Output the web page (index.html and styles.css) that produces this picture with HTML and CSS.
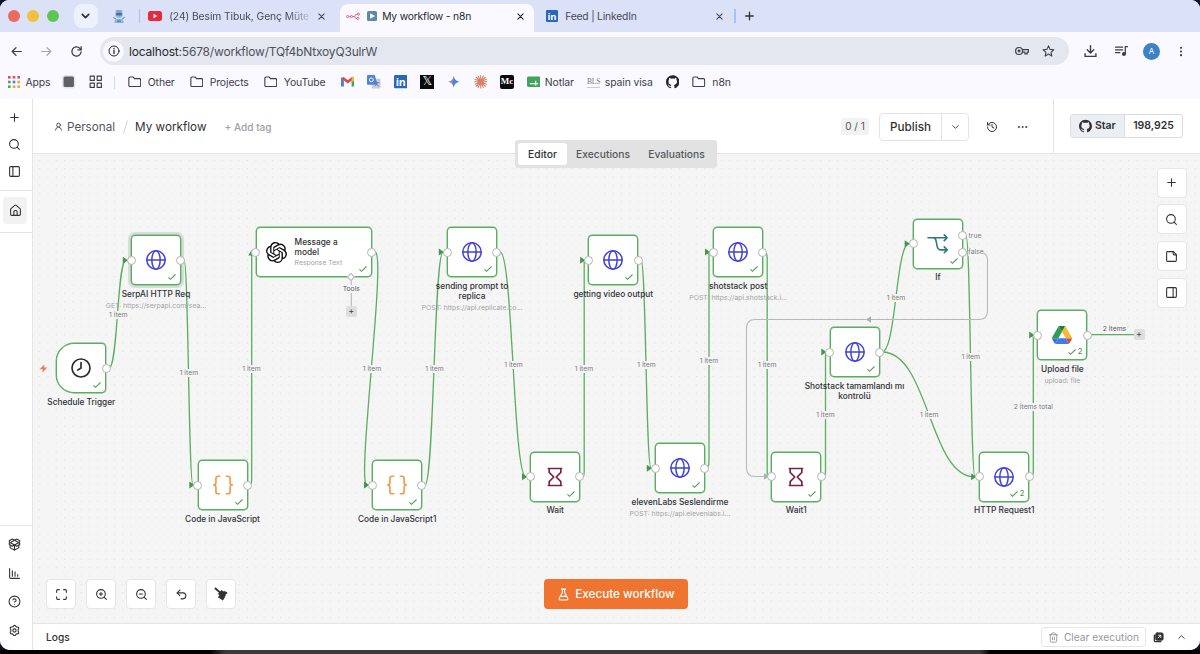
FILE: index.html
```html
<!DOCTYPE html>
<html lang="en">
<head>
  <meta charset="UTF-8" />
  <title>My workflow - n8n</title>
  <meta name="viewport" content="width=device-width, initial-scale=1.0"/>
  <link rel="stylesheet" href="styles.css">
</head>
<body>

  <!-- icon sprite -->
  <svg class="sprite" width="0" height="0">
    <symbol id="plus" viewBox="0 0 24 24"><path d="M5 12h14M12 5v14"/></symbol>
    <symbol id="close" viewBox="0 0 24 24"><path d="M5 5l14 14M19 5L5 19"/></symbol>
    <symbol id="search" viewBox="0 0 24 24"><circle cx="11" cy="11" r="8"/><path d="M21 21l-4.3-4.3"/></symbol>
    <symbol id="panel-left" viewBox="0 0 24 24"><rect x="3" y="3" width="18" height="18" rx="2"/><path d="M9 3v18"/></symbol>
    <symbol id="panel-right" viewBox="0 0 24 24"><rect x="3" y="3" width="18" height="18" rx="2"/><path d="M15 3v18"/></symbol>
    <symbol id="home" viewBox="0 0 24 24"><path d="M15 21v-7a2 2 0 0 0-2-2h-2a2 2 0 0 0-2 2v7"/><path d="M3 10a2 2 0 0 1 .7-1.5l7-6a2 2 0 0 1 2.6 0l7 6A2 2 0 0 1 21 10v9a2 2 0 0 1-2 2H5a2 2 0 0 1-2-2z"/></symbol>
    <symbol id="package" viewBox="0 0 24 24"><path d="M12 22v-9"/><path d="M15.2 2.2a1.7 1.7 0 0 1 1.6 0L21 4.6a1.9 1.9 0 0 1 0 3.2L8.8 14.8a1.7 1.7 0 0 1-1.6 0L3 12.4a1.9 1.9 0 0 1 0-3.2z"/><path d="M20 13v3.9a2 2 0 0 1-1.1 1.8l-6 3a2 2 0 0 1-1.8 0l-6-3A2 2 0 0 1 4 16.9V13"/><path d="M21 12.4a1.9 1.9 0 0 0 0-3.2L8.8 2.2a1.7 1.7 0 0 0-1.6 0L3 4.6a1.9 1.9 0 0 0 0 3.2l12.2 7a1.7 1.7 0 0 0 1.6 0z"/></symbol>
    <symbol id="chart" viewBox="0 0 24 24"><path d="M3 3v16a2 2 0 0 0 2 2h16M8 17V7M13 17V9M18 17v-3"/></symbol>
    <symbol id="help" viewBox="0 0 24 24"><circle cx="12" cy="12" r="10"/><path d="M9.1 9a3 3 0 0 1 5.8 1c0 2-3 3-3 3M12 17h.01"/></symbol>
    <symbol id="gear" viewBox="0 0 24 24"><path d="M10 3.5a2.3 2.3 0 0 1 4 0l.5.9a2.3 2.3 0 0 0 2 1.1h1a2.3 2.3 0 0 1 2 3.5l-.6 1a2.3 2.3 0 0 0 0 2.3v1.4l.6 1a2.3 2.3 0 0 1-2 3.5h-1a2.3 2.3 0 0 0-2 1.1l-.5.9a2.3 2.3 0 0 1-4 0l-.5-.9a2.3 2.3 0 0 0-2-1.1h-1a2.3 2.3 0 0 1-2-3.5l.6-1a2.3 2.3 0 0 0 0-2.3v-1.4l-.6-1a2.3 2.3 0 0 1 2-3.5h1a2.3 2.3 0 0 0 2-1.1z"/><circle cx="12" cy="12" r="3"/></symbol>
    <symbol id="user" viewBox="0 0 24 24"><circle cx="12" cy="8" r="5"/><path d="M20 22a8 8 0 0 0-16 0"/></symbol>
    <symbol id="chevron-down" viewBox="0 0 24 24"><path d="M6 9l6 6 6-6"/></symbol>
    <symbol id="chevron-up" viewBox="0 0 24 24"><path d="M6 15l6-6 6 6"/></symbol>
    <symbol id="history" viewBox="0 0 24 24"><path d="M3 12a9 9 0 1 0 9-9 9.7 9.7 0 0 0-6.7 2.7L3 8"/><path d="M3 3v5h5M12 7v5l4 2"/></symbol>
    <symbol id="dots" viewBox="0 0 24 24"><g fill="currentColor" stroke-width="1"><circle cx="4" cy="12" r="1.5"/><circle cx="12" cy="12" r="1.5"/><circle cx="20" cy="12" r="1.5"/></g></symbol>
    <symbol id="note" viewBox="0 0 24 24"><path d="M15.5 3H5a2 2 0 0 0-2 2v14a2 2 0 0 0 2 2h14a2 2 0 0 0 2-2V8.5z"/><path d="M15 3v4a2 2 0 0 0 2 2h4"/></symbol>
    <symbol id="fit" viewBox="0 0 24 24"><path d="M8 3H5a2 2 0 0 0-2 2v3M21 8V5a2 2 0 0 0-2-2h-3M3 16v3a2 2 0 0 0 2 2h3M16 21h3a2 2 0 0 0 2-2v-3"/></symbol>
    <symbol id="zoom-in" viewBox="0 0 24 24"><circle cx="11" cy="11" r="8"/><path d="M21 21l-4.3-4.3M11 8v6M8 11h6"/></symbol>
    <symbol id="zoom-out" viewBox="0 0 24 24"><circle cx="11" cy="11" r="8"/><path d="M21 21l-4.3-4.3M8 11h6"/></symbol>
    <symbol id="undo" viewBox="0 0 24 24"><path d="M9 14L4 9l5-5"/><path d="M4 9h10.5a5.5 5.5 0 0 1 0 11H11"/></symbol>
    <symbol id="broom" viewBox="0 0 24 24"><path d="M2.5 2.5L11 10" stroke-width="3.2"/><path d="M8 11l5-5 3 2 2-.5 4.500 2.500-3 3-1 3.500-1.500 2.500-2 3.500-3-2.500-4.500-2.500 2-2.500z" fill="currentColor" stroke-width="1.500"/></symbol>
    <symbol id="flask" viewBox="0 0 24 24"><path d="M14 2v6.5l5.8 10.5a2 2 0 0 1-1.8 3H6a2 2 0 0 1-1.8-3L10 8.5V2M8 2h8M7 15.5h10"/></symbol>
    <symbol id="trash" viewBox="0 0 24 24"><path d="M3 6h18M19 6v14a2 2 0 0 1-2 2H7a2 2 0 0 1-2-2V6M8 6V4a2 2 0 0 1 2-2h4a2 2 0 0 1 2 2v2M10 11v6M14 11v6"/></symbol>
    <symbol id="popout" viewBox="0 0 24 24"><path d="M3 7v12a2 2 0 0 0 2 2h12" stroke-width="3"/><rect x="6" y="2" width="16" height="16" rx="3" fill="currentColor"/><path d="M11 13l6-6M12 7h5v5" stroke="#fff" stroke-width="1.800"/></symbol>
    <symbol id="arrow-left" viewBox="0 0 24 24"><path d="M21 12H4M11 5l-7 7 7 7"/></symbol>
    <symbol id="arrow-right" viewBox="0 0 24 24"><path d="M3 12h17M13 5l7 7-7 7"/></symbol>
    <symbol id="reload" viewBox="0 0 24 24"><path d="M20.5 12.5a8.5 8.5 0 1 1-2.5-6.5l2.5 2.5"/><path d="M20.5 3v6h-6"/></symbol>
    <symbol id="info" viewBox="0 0 24 24"><circle cx="12" cy="12" r="10"/><path d="M12 11v6M12 7v.5" stroke-width="2.6"/></symbol>
    <symbol id="key" viewBox="0 0 24 24"><circle cx="7" cy="12" r="6"/><circle cx="7" cy="12" r="1.5" fill="currentColor"/><path d="M12.5 9.5H23v4.500h-2v3h-4v-3h-4.500"/></symbol>
    <symbol id="star" viewBox="0 0 24 24"><path d="M12 2.5l2.9 6.5 7 .7-5.3 4.7 1.600 7-6.200-3.700-6.200 3.700 1.600-7L2.100 9.700l7-.7z"/></symbol>
    <symbol id="download" viewBox="0 0 24 24"><path d="M12 2v13M6 9.5l6 6 6-6M2 17v5h20v-5"/></symbol>
    <symbol id="queue" viewBox="0 0 24 24"><path d="M1 5h13M1 10h13M1 15h8M19 17V4h4"/><circle cx="16.500" cy="17.500" r="2.500" fill="currentColor"/></symbol>
    <symbol id="kebab" viewBox="0 0 24 24"><g fill="currentColor" stroke="none"><circle cx="12" cy="4" r="2.300"/><circle cx="12" cy="12" r="2.300"/><circle cx="12" cy="20" r="2.300"/></g></symbol>
    <symbol id="folder" viewBox="0 0 24 24"><path d="M1.500 5.500a2 2 0 0 1 2-2H9l2.500 3h9a2 2 0 0 1 2 2v10a2 2 0 0 1-2 2h-17a2 2 0 0 1-2-2z"/></symbol>
    <symbol id="squares" viewBox="0 0 24 24"><rect x="2" y="2" width="7.500" height="7.500"/><rect x="14.500" y="2" width="7.500" height="7.500"/><rect x="2" y="14.500" width="7.500" height="7.500"/><rect x="14.500" y="14.500" width="7.500" height="7.500"/></symbol>
    <symbol id="github" viewBox="0 0 24 24"><path fill="currentColor" stroke="none" d="M12 .297c-6.630 0-12 5.373-12 12 0 5.303 3.438 9.800 8.205 11.385.6.113.82-.258.82-.577 0-.285-.01-1.040-.015-2.040-3.338.724-4.042-1.610-4.042-1.610C4.422 18.070 3.633 17.700 3.633 17.700c-1.087-.744.084-.729.084-.729 1.205.084 1.838 1.236 1.838 1.236 1.070 1.835 2.809 1.305 3.495.998.108-.776.417-1.305.76-1.605-2.665-.3-5.466-1.332-5.466-5.930 0-1.310.465-2.380 1.235-3.220-.135-.303-.54-1.523.105-3.176 0 0 1.005-.322 3.300 1.230.96-.267 1.980-.399 3-.405 1.020.006 2.040.138 3 .405 2.280-1.552 3.285-1.230 3.285-1.230.645 1.653.24 2.873.12 3.176.765.840 1.230 1.910 1.230 3.220 0 4.610-2.805 5.625-5.475 5.920.42.360.81 1.096.81 2.220 0 1.606-.015 2.896-.015 3.286 0 .315.21.690.825.570C20.565 22.092 24 17.592 24 12.297c0-6.627-5.373-12-12-12"/></symbol>

    <!-- node icons -->
    <symbol id="globe" viewBox="0 0 24 24"><g stroke="#4243d4" stroke-width="1.800"><circle cx="12" cy="12" r="11"/><ellipse cx="12" cy="12" rx="5" ry="11"/><path d="M1 12h22"/></g></symbol>
    <symbol id="clock" viewBox="0 0 24 24"><g stroke="#2b2b33" stroke-width="2"><circle cx="12" cy="12" r="10.800"/><path d="M12 5.500V12l-4 2.500"/></g></symbol>
    <symbol id="braces" viewBox="0 0 24 24"><path stroke="#f29b4e" stroke-width="2" d="M8 1.500H6a2.500 2.500 0 0 0-2.500 2.500v5c0 1.800-1 3-2.800 3 1.800 0 2.800 1.200 2.800 3v5A2.500 2.500 0 0 0 6 22.500h2M16 1.500h2a2.500 2.500 0 0 1 2.500 2.500v5c0 1.800 1 3 2.800 3-1.800 0-2.800 1.200-2.800 3v5a2.500 2.500 0 0 1-2.500 2.500h-2"/></symbol>
    <symbol id="hourglass" viewBox="0 0 24 24"><path stroke="#7b2346" stroke-width="2" d="M4 1.800h16M4 22.200h16M5 2v4.500l5.500 5.500L5 17.500V22M19 2v4.500L13.500 12l5.500 5.500V22"/></symbol>
    <symbol id="if" viewBox="0 0 24 24"><path stroke="#2f7a73" stroke-width="1.900" d="M0 4.500h23M19.500 1l3.500 3.500L19.500 8M6.500 4.500c2.500 0 2.800 1.500 3.300 4l1 5.500c.6 3.500 1.500 5 4.200 5h8M19.500 15.500l3.500 3.500-3.500 3.500"/></symbol>
    <symbol id="drive" viewBox="0 0 87.300 78">
      <g stroke="none">
        <path fill="#3b6fe0" d="M6.600 66.850l3.850 6.650c.8 1.400 1.950 2.500 3.300 3.300L27.500 53H0c0 1.550.4 3.100 1.200 4.500z"/>
        <path fill="#2f9e4f" d="M43.650 25L29.900 1.200c-1.350.8-2.500 1.900-3.300 3.300l-25.400 44A9.060 9.060 0 0 0 0 53h27.500z"/>
        <path fill="#dd4b3c" d="M73.550 76.800c1.350-.8 2.500-1.900 3.300-3.300l9.250-16c.8-1.400 1.200-2.950 1.200-4.500H59.800l5.850 11.500z"/>
        <path fill="#1f7a3a" d="M43.650 25L57.400 1.200C56.050.4 54.500 0 52.900 0H34.400c-1.600 0-3.150.450-4.500 1.200z"/>
        <path fill="#3f7ee8" d="M59.800 53H27.500L13.750 76.800c1.350.8 2.900 1.200 4.500 1.200h50.800c1.600 0 3.150-.450 4.500-1.200z"/>
        <path fill="#f6bb35" d="M73.400 26.500l-12.700-22c-.8-1.400-1.950-2.500-3.300-3.300L43.650 25 59.800 53h27.450c0-1.550-.4-3.100-1.200-4.500z"/>
      </g>
    </symbol>
    <symbol id="openai" viewBox="0 0 24 24"><path fill="#0d0d0d" stroke="none" d="M22.2819 9.8211a5.9847 5.9847 0 0 0-.5157-4.9108 6.0462 6.0462 0 0 0-6.5098-2.9A6.0651 6.0651 0 0 0 4.9807 4.1818a5.9847 5.9847 0 0 0-3.9977 2.9 6.0462 6.0462 0 0 0 .7427 7.0966 5.98 5.98 0 0 0 .511 4.9107 6.051 6.051 0 0 0 6.5146 2.9001A5.9847 5.9847 0 0 0 13.2599 24a6.0557 6.0557 0 0 0 5.7718-4.2058 5.9894 5.9894 0 0 0 3.9977-2.9001 6.0557 6.0557 0 0 0-.7475-7.0729zm-9.022 12.6081a4.4755 4.4755 0 0 1-2.8764-1.0408l.1419-.0804 4.7783-2.7582a.7948.7948 0 0 0 .3927-.6813v-6.7369l2.02 1.1686a.071.071 0 0 1 .038.052v5.5826a4.504 4.504 0 0 1-4.4945 4.4944zm-9.6607-4.1254a4.4708 4.4708 0 0 1-.5346-3.0137l.142.0852 4.783 2.7582a.7712.7712 0 0 0 .7806 0l5.8428-3.3685v2.3324a.0804.0804 0 0 1-.0332.0615L9.74 19.9502a4.4992 4.4992 0 0 1-6.1408-1.6464zM2.3408 7.8956a4.485 4.485 0 0 1 2.3655-1.9728V11.6a.7664.7664 0 0 0 .3879.6765l5.8144 3.3543-2.0201 1.1685a.0757.0757 0 0 1-.071 0l-4.8303-2.7865A4.504 4.504 0 0 1 2.3408 7.872zm16.5963 3.8558L13.1038 8.364 15.1192 7.2a.0757.0757 0 0 1 .071 0l4.8303 2.7913a4.4944 4.4944 0 0 1-.6765 8.1042v-5.6772a.79.79 0 0 0-.407-.667zm2.0107-3.0231l-.142-.0852-4.7735-2.7818a.7759.7759 0 0 0-.7854 0L9.409 9.2297V6.8974a.0662.0662 0 0 1 .0284-.0615l4.8303-2.7866a4.4992 4.4992 0 0 1 6.6802 4.66zM8.3065 12.863l-2.02-1.1638a.0804.0804 0 0 1-.038-.0567V6.0742a4.4992 4.4992 0 0 1 7.3757-3.4537l-.142.0805L8.704 5.459a.7948.7948 0 0 0-.3927.6813zm1.0976-2.3654l2.602-1.4998 2.6069 1.4998v2.9994l-2.5974 1.4997-2.6067-1.4997Z"/></symbol>
    <symbol id="check" viewBox="0 0 24 24"><path stroke="#4a9e52" stroke-width="3.200" d="M1.500 13l6 6L22.500 4.500"/></symbol>

    <!-- site icons -->
    <symbol id="linkedin" viewBox="0 0 24 24"><rect width="24" height="24" rx="2.500" fill="#2a66bc" stroke="none"/><text class="in-text" x="12" y="19.500" text-anchor="middle">in</text></symbol>
  </svg>

  <div class="window">
    <div class="tab-strip">
      <div class="lights"><i class="red"></i><i class="yellow"></i><i class="green"></i></div>
      <div class="tab-search"><svg class="icon"><use href="#chevron-down"/></svg></div>
      <svg class="robot" viewBox="0 0 12 14"><circle cx="6" cy="4.500" r="4" fill="#8bbde2"/><rect x="3" y="3" width="6" height="3" rx="1" fill="#4a6a94"/><path d="M1 14c0-6 10-6 10 0z" fill="#7db6df"/><path d="M0 8l3 2M12 8l-3 2M4 12h4" stroke="#4a6a94"/><path d="M2.500 1h7" stroke="#5f82a8"/></svg>
      <span class="tab-sep"></span>
      <div class="tab">
        <svg class="yt" viewBox="0 0 14 10"><rect width="14" height="10" rx="2.500" fill="#e8283c"/><path d="M5.500 2.800v4.400L9.300 5z" fill="#fff"/></svg>
        <span class="tab-title faded">(24) Besim Tibuk, Genç Müte</span>
        <svg class="icon x"><use href="#close"/></svg>
      </div>
      <div class="tab active">
        <svg class="n8n" viewBox="0 0 26 14" fill="none" stroke="#e0617c" stroke-width="1.800"><circle cx="3" cy="8" r="2"/><circle cx="10" cy="8" r="2"/><path d="M5 8h3M12 8h3c3 0 1-4 4-4h2M15 8c3 0 1 4 5 4"/><circle cx="23" cy="3.500" r="2"/><circle cx="22" cy="11.500" r="2"/></svg>
        <svg class="play" viewBox="0 0 10 10"><rect width="10" height="10" rx="1.500" fill="#5f87a8"/><path d="M3.200 2.200v5.600L8 5z" fill="#fff"/></svg>
        <span class="tab-title">My workflow - n8n</span>
        <svg class="icon x"><use href="#close"/></svg>
      </div>
      <div class="tab">
        <svg class="li"><use href="#linkedin"/></svg>
        <span class="tab-title">Feed | LinkedIn</span>
        <svg class="icon x"><use href="#close"/></svg>
      </div>
      <span class="tab-sep"></span>
      <svg class="icon new-tab"><use href="#plus"/></svg>
    </div>

    <div class="toolbar">
      <svg class="icon nav"><use href="#arrow-left"/></svg>
      <svg class="icon nav dim"><use href="#arrow-right"/></svg>
      <svg class="icon nav"><use href="#reload"/></svg>
      <div class="url-bar">
        <span class="site-info"><svg class="icon"><use href="#info"/></svg></span>
        <span class="url"><b>localhost</b>:5678/workflow/TQf4bNtxoyQ3ulrW</span>
        <svg class="icon key"><use href="#key"/></svg>
        <svg class="icon fav"><use href="#star"/></svg>
      </div>
      <svg class="icon dl"><use href="#download"/></svg>
      <svg class="icon queue"><use href="#queue"/></svg>
      <span class="avatar">A</span>
      <svg class="icon kebab"><use href="#kebab"/></svg>
    </div>

    <div class="bookmarks">
      <span class="bm apps"><svg viewBox="0 0 12 12"><g fill="#d9534f"><rect width="2.600" height="2.600"/><rect x="4.700" width="2.600" height="2.600"/><rect x="9.400" width="2.600" height="2.600"/></g><rect y="4.700" width="2.600" height="2.600" fill="#4fa45c"/><rect x="4.700" y="4.700" width="2.600" height="2.600" fill="#4a7fe0"/><rect x="9.400" y="4.700" width="2.600" height="2.600" fill="#e5a93c"/><rect y="9.400" width="2.600" height="2.600" fill="#4fa45c"/><g fill="#e5a93c"><rect x="4.700" y="9.400" width="2.600" height="2.600"/><rect x="9.400" y="9.400" width="2.600" height="2.600"/></g></svg>Apps</span>
      <span class="bm"><svg viewBox="0 0 13 13"><rect width="13" height="13" rx="3" fill="#e6e6ea"/><rect x="1.500" y="1.500" width="10" height="10" rx="1.500" fill="#5e6165"/></svg></span>
      <span class="bm"><svg class="icon"><use href="#squares"/></svg></span>
      <span class="bm-sep"></span>
      <span class="bm dir"><svg class="icon"><use href="#folder"/></svg>Other</span>
      <span class="bm dir"><svg class="icon"><use href="#folder"/></svg>Projects</span>
      <span class="bm dir"><svg class="icon"><use href="#folder"/></svg>YouTube</span>
      <span class="bm"><svg viewBox="0 0 14 12"><path d="M0 1v10h3V4.500z" fill="#4a7fe0"/><path d="M14 1v10h-3V4.500z" fill="#3fa35a"/><path d="M1.500 1.800L7 6l5.500-4.200" fill="none" stroke="#de4b40" stroke-width="2.800"/><path d="M11 1.500l3-1v4l-3 2z" fill="#efb73b"/></svg></span>
      <span class="bm"><svg viewBox="0 0 14 14"><rect x="5" y="4" width="9" height="10" rx="1" fill="#c9ccd4"/><path d="M1 0h7l3 10H1a1 1 0 0 1-1-1V1a1 1 0 0 1 1-1z" fill="#4c83e0"/><circle cx="4.500" cy="5" r="2" fill="none" stroke="#fff"/><path d="M8 8h5M10.500 7v1.500l-2 3M9.500 9.500l3 2.500" stroke="#6b7fa8" fill="none"/></svg></span>
      <span class="bm"><svg><use href="#linkedin"/></svg></span>
      <span class="bm"><i class="x-logo">𝕏</i></span>
      <span class="bm"><svg viewBox="0 0 24 24"><defs><linearGradient id="gem" x1="0" y1="0" x2="1" y2=".3"><stop offset="0" stop-color="#e8b23d"/><stop offset=".4" stop-color="#b287a0"/><stop offset=".6" stop-color="#4a84e4"/><stop offset="1" stop-color="#3f7fe8"/></linearGradient></defs><path fill="url(#gem)" d="M12 1c1 7 4 10 11 11-7 1-10 4-11 11-1-7-4-10-11-11C8 11 11 8 12 1z"/></svg></span>
      <span class="bm"><svg viewBox="0 0 24 24" stroke="#d48365" stroke-width="2" stroke-linecap="round"><path d="M12 1v22M1 12h22M4 4l16 16M20 4L4 20M7.500 2l9 20M16.500 2l-9 20M2 7.500l20 9M2 16.500l20-9"/></svg></span>
      <span class="bm"><i class="medium">Mc</i></span>
      <span class="bm notlar"><svg viewBox="0 0 14 11"><rect width="14" height="11" rx="1.500" fill="#43a45b"/><path d="M3 7.500h8.500M9 4.500v5" stroke="#fff" stroke-width="1.300"/></svg>Notlar</span>
      <span class="bm visa"><i class="bls">BLS</i>spain visa</span>
      <span class="bm"><svg class="icon gh"><use href="#github"/></svg></span>
      <span class="bm"><svg class="icon"><use href="#folder"/></svg>n8n</span>
    </div>

    <div class="app">
      <aside class="sidebar">
        <nav class="side-top">
          <svg class="icon"><use href="#plus"/></svg>
          <svg class="icon"><use href="#search"/></svg>
          <svg class="icon"><use href="#panel-left"/></svg>
        </nav>
        <div class="side-home"><span><svg class="icon"><use href="#home"/></svg></span></div>
        <nav class="side-bottom">
          <svg class="icon"><use href="#package"/></svg>
          <svg class="icon"><use href="#chart"/></svg>
          <svg class="icon"><use href="#help"/></svg>
          <svg class="icon"><use href="#gear"/></svg>
        </nav>
      </aside>

      <main class="main">
        <header class="header">
          <svg class="icon user"><use href="#user"/></svg>
          <span class="crumb">Personal</span>
          <svg class="slash" viewBox="0 0 5 14"><path d="M4.500.5l-4 13"/></svg>
          <span class="wf-name">My workflow</span>
          <span class="add-tag">+ Add tag</span>
          <span class="counter">0 / 1</span>
          <div class="publish"><span>Publish</span><svg class="icon"><use href="#chevron-down"/></svg></div>
          <svg class="icon hist"><use href="#history"/></svg>
          <svg class="icon more"><use href="#dots"/></svg>
          <div class="github">
            <div class="gh-btn"><span class="gh-star"><svg class="icon"><use href="#github"/></svg>Star</span><span class="gh-count">198,925</span></div>
          </div>
          <div class="view-tabs"><span class="on">Editor</span><span>Executions</span><span>Evaluations</span></div>
        </header>

        <section class="canvas">
          <div class="viewport" id="viewport">
            <svg class="edges" width="1200" height="654" viewBox="0 0 1200 654">
              <g class="edge">
                <path d="M109 368C118 368 117 260 126 260"/>
                <path d="M184 260C188.500 260 188.500 485 193 485"/>
                <path d="M250 485Q251.700 485 251.700 478V254"/>
                <path d="M375 252C387 252 356 485 367 485"/>
                <path d="M425 485C434 485 434 252 443 252"/>
                <path d="M500 252C513 252 513 477 526 477"/>
                <path d="M583 477Q584.200 477 584.200 470V260"/>
                <path d="M641 260C646 260 646 468 651 468"/>
                <path d="M707 468Q709 468 709 460V252"/>
                <path d="M765 252Q767.200 252 767.200 260V477"/>
                <path d="M824 477Q825.500 477 825.500 470V352"/>
                <path d="M882 352C896 352 896 243.500 909 243.500"/>
                <path d="M882 352C929 352 929 477 975 477"/>
                <path d="M966 235.500C970.500 235.500 970.500 477 975 477"/>
                <path d="M1032 477Q1033.300 477 1033.300 470V335"/>
                <path d="M1090 334.700H1134"/>
              </g>
              <path class="edge-off" d="M966 252H979Q987.500 252 987.500 260.500V311Q987.500 319.500 979 319.500H755Q746.500 319.500 746.500 328V468Q746.500 476.500 755 476.500H766"/>
              <path class="edge-off" d="M351.300 277V307"/>
              <path class="head-off" d="M866 319.500l5-3.300v6.600zM769 476.500l-5-3.300v6.600z"/>
              <g class="head" id="heads"></g>
            </svg>
          </div>

          <div class="side-tools">
            <button><svg class="icon"><use href="#plus"/></svg></button>
            <button><svg class="icon"><use href="#search"/></svg></button>
            <button><svg class="icon"><use href="#note"/></svg></button>
            <button><svg class="icon"><use href="#panel-right"/></svg></button>
          </div>
          <div class="zoom-tools">
            <button><svg class="icon"><use href="#fit"/></svg></button>
            <button><svg class="icon"><use href="#zoom-in"/></svg></button>
            <button><svg class="icon"><use href="#zoom-out"/></svg></button>
            <button><svg class="icon"><use href="#undo"/></svg></button>
            <button><svg class="icon broom"><use href="#broom"/></svg></button>
          </div>
          <button class="execute"><svg class="icon"><use href="#flask"/></svg>Execute workflow</button>
        </section>

        <footer class="logs">
          <span class="logs-title">Logs</span>
          <span class="clear"><svg class="icon"><use href="#trash"/></svg>Clear execution</span>
          <svg class="icon pop"><use href="#popout"/></svg>
          <svg class="icon up"><use href="#chevron-up"/></svg>
        </footer>
      </main>
    </div>
  </div>
  <div class="desk"></div>

  <script>
    // x, y = top left corner of the node on the canvas
    const nodes = [
      { x: 56.3, y: 343.3, icon: 'clock', name: 'Schedule Trigger', type: 'trigger', outs: [25] },
      { x: 131, y: 235.3, icon: 'globe', name: 'SerpAI HTTP Req', sub: 'GET: https://serpapi.com/sea...', type: 'selected', arrow: true },
      { x: 197.5, y: 460, icon: 'braces', name: 'Code in JavaScript', arrow: true },
      { x: 255.6, y: 227, icon: 'openai', name: 'Message a<br>model', sub: 'Response Text', type: 'wide' },
      { x: 372.2, y: 460, icon: 'braces', name: 'Code in JavaScript1', arrow: true },
      { x: 447, y: 227, icon: 'globe', name: 'sending prompt to<br>replica', sub: 'POST: https://api.replicate.co...', arrow: true },
      { x: 530.2, y: 451.7, icon: 'hourglass', name: 'Wait', arrow: true },
      { x: 588.3, y: 235.3, icon: 'globe', name: 'getting video output', arrow: true },
      { x: 655, y: 443.3, icon: 'globe', name: 'elevenLabs Seslendirme', sub: 'POST: https://api.elevenlabs.i...', arrow: true },
      { x: 713.2, y: 227, icon: 'globe', name: 'shotstack post', sub: 'POST: https://api.shotstack.i...', arrow: true },
      { x: 771.3, y: 451.7, icon: 'hourglass', name: 'Wait1' },
      { x: 829.5, y: 327, icon: 'globe', name: 'Shotstack tamamlandı mı<br>kontrolü', arrow: true },
      { x: 912.9, y: 218.7, icon: 'if', name: 'If', arrow: true, outs: [16.7, 33.3] },
      { x: 979.3, y: 451.7, icon: 'globe', name: 'HTTP Request1', arrow: true, count: 2 },
      { x: 1037.4, y: 310, icon: 'drive', name: 'Upload file', sub: 'upload: file', arrow: true, count: 2 }
    ];

    // text drawn over the connections
    const labels = [
      [118.3, 314.5, '1 item'], [188.9, 373, '1 item'], [251.5, 369, '1 item'], [372, 369, '1 item'],
      [434.5, 369, '1 item'], [513.5, 364.7, '1 item'], [584, 369, '1 item'], [646.5, 364.7, '1 item'],
      [709, 360.6, '1 item'], [767.2, 364.7, '1 item'], [825.4, 415, '1 item'], [896, 298.3, '1 item'],
      [929.2, 415, '1 item'], [970.8, 356.5, '1 item'], [1033.4, 406.5, '2 items total'],
      [1114.5, 329, '2 items', 'dark'], [975, 236, 'true'], [976, 252.3, 'false'], [351.3, 289, 'Tools', 'dark']
    ];

    const viewport = document.getElementById('viewport');
    const heads = document.getElementById('heads');
    let arrowPaths = '<path d="M251.700 250l3.500 5.500h-7z"/>';

    function addDiv(className, x, y, html) {
      const el = document.createElement('div');
      el.className = className;
      el.style.left = x + 'px';
      el.style.top = y + 'px';
      el.innerHTML = html;
      viewport.appendChild(el);
    }

    labels.forEach(([x, y, text, kind]) => addDiv('edge-label ' + (kind || ''), x, y, text));

    nodes.forEach(node => {
      const outs = node.outs || [25];
      let html = `<svg class="node-icon ${node.icon}"><use href="#${node.icon}"/></svg>`;
      if (node.type !== 'trigger') html += '<i class="port in"></i>';
      outs.forEach(top => html += `<i class="port out" style="top:${top}px"></i>`);
      html += `<div class="done"><svg><use href="#check"/></svg>${node.count || ''}</div>`;
      html += `<div class="caption"><div class="name">${node.name}</div>`;
      if (node.sub) html += `<div class="sub">${node.sub}</div>`;
      html += '</div>';
      addDiv('node ' + (node.type || ''), node.x, node.y, html);
      if (node.arrow) {
        arrowPaths += `<path d="M${node.x - 3} ${node.y + 25}l-5.200 -3.500v7z"/>`;
      }
    });

    heads.innerHTML = arrowPaths;
    addDiv('diamond', 351.3, 277, '');
    addDiv('add-box', 351.3, 311.3, '+');
    addDiv('add-box', 1139, 334.7, '+');
    addDiv('bolt', 43.5, 368, '<svg viewBox="0 0 24 24"><path d="M14 1L2 14h8l-1 9 13-14h-8z" fill="#ea7e52"/></svg>');
  </script>
</body>
</html>
```
FILE: styles.css
```css
* {
  box-sizing: border-box;
}

body {
  margin: 0;
  width: 1200px;
  height: 654px;
  overflow: hidden;
  background: #0d1226;
  font-family: Inter, "Liberation Sans", sans-serif;
  color: #303236;
}

i {
  font-style: normal;
}

.sprite {
  position: absolute;
}

.icon {
  width: 14px;
  height: 14px;
  flex: none;
  fill: none;
  stroke: currentColor;
  stroke-width: 2;
  stroke-linecap: round;
  stroke-linejoin: round;
}

.in-text {
  font: bold 19px "Open Sans", sans-serif;
  fill: #fff;
}

.window {
  width: 1200px;
  height: 650px;
  border-radius: 9px 9px 10px 10px;
  overflow: hidden;
  background: #f9f9ff;
}

/* browser tabs */
.tab-strip {
  display: flex;
  align-items: center;
  height: 32px;
  background: #dbe1f6;
}

.lights {
  display: flex;
  gap: 7.300px;
  padding-left: 8px;
}

.lights i {
  width: 12px;
  height: 12px;
  border-radius: 50%;
}

.red { background: #ed6a5f; }
.yellow { background: #f2c03d; }
.green { background: #5cc653; }

.tab-search {
  display: flex;
  align-items: center;
  justify-content: center;
  width: 24px;
  height: 24px;
  margin-left: 15.400px;
  border-radius: 8px;
  background: #edf0fd;
}

.tab-search .icon {
  width: 13px;
  stroke-width: 3.200;
}

.robot {
  width: 12px;
  height: 13px;
  margin-left: 15px;
}

.tab-sep {
  width: 1.500px;
  height: 14px;
  background: #a9c4f3;
}

.robot + .tab-sep {
  margin-left: 13.700px;
}

.tab {
  display: flex;
  align-items: center;
  align-self: flex-end;
  width: 200px;
  height: 28px;
  padding: 0 14px 4px 8px;
  font-size: 10.300px;
  letter-spacing: -.18px;
  color: #474b58;
}

.tab.active {
  width: 194px;
  padding: 0 9px 4px 6px;
  border-radius: 8px 8px 0 0;
  background: #f9f9ff;
  color: #26282e;
}

.tab.active + .tab {
  padding-left: 12px;
  padding-right: 10px;
}

.tab .yt {
  width: 14px;
  height: 10px;
}

.tab .n8n {
  width: 14px;
  height: 8px;
}

.tab .play {
  width: 10px;
  height: 10px;
  margin-left: 7px;
}

.tab .li {
  width: 12px;
  height: 12px;
}

.tab-title {
  margin-left: 7px;
  white-space: nowrap;
}

.tab.active .tab-title {
  margin-left: 5px;
}

.tab-title.faded {
  letter-spacing: -.08px;
  -webkit-mask-image: linear-gradient(to right, #000 84%, transparent 104%);
}

.tab .x {
  width: 9px;
  height: 9px;
  margin-left: auto;
  stroke-width: 3;
}

.new-tab {
  width: 13px;
  margin-left: 7px;
  stroke-width: 2.400;
}

/* toolbar */
.toolbar {
  display: flex;
  align-items: center;
  height: 38px;
  color: #3c3f46;
}

.nav {
  width: 13px;
  height: 13px;
  margin-left: 10px;
  stroke-width: 2.300;
}

.nav + .nav {
  margin-left: 17px;
}

.dim {
  color: #a6a8b0;
}

.url-bar {
  display: flex;
  align-items: center;
  width: 969px;
  height: 28px;
  margin-left: 17px;
  padding: 0 14px 0 3px;
  border-radius: 14px;
  background: #e4e7f0;
}

.site-info {
  display: flex;
  align-items: center;
  justify-content: center;
  width: 21px;
  height: 21px;
  border-radius: 50%;
  background: #f9f9ff;
}

.site-info .icon {
  width: 12px;
  color: #26282e;
}

.url {
  margin-left: 5px;
  font-size: 12px;
  letter-spacing: -.19px;
  color: #4d515b;
}

.url b {
  font-weight: 400;
  color: #26282e;
}

.key {
  width: 16px;
  margin-left: auto;
}

.fav {
  width: 13px;
  margin-left: 12px;
}

.dl {
  width: 13px;
  margin-left: 15px;
  stroke-width: 2.600;
}

.queue {
  width: 13px;
  margin-left: 18px;
  stroke-width: 2.300;
}

.avatar {
  width: 17px;
  height: 17px;
  margin-left: 15px;
  border-radius: 50%;
  background: #3b82c6;
  color: #fff;
  font-size: 8px;
  line-height: 17px;
  text-align: center;
}

.kebab {
  width: 12px;
  height: 11px;
  margin-left: 15px;
}

/* bookmarks */
.bookmarks {
  display: flex;
  align-items: center;
  gap: 13.100px;
  height: 30px;
  margin-bottom: -1px;
  padding: 0 0 5px 8px;
  border-bottom: 1px solid #dfe1e8;
  font-size: 10.400px;
  letter-spacing: -.12px;
  color: #3c3f46;
}

.bm {
  display: flex;
  align-items: center;
  gap: 6.500px;
  white-space: nowrap;
}

.bm svg {
  width: 13.500px;
  height: 13.500px;
}

.bm-sep {
  width: 1px;
  height: 13px;
  margin-left: -1.500px;
  background: #cbdcf8;
}

.bm.dir {
  margin-right: 2px;
}

.bm.apps {
  margin-right: -1.500px;
  gap: 5.500px;
}

.bm.apps svg {
  width: 12px;
  height: 12px;
}

.bm .gh {
  color: #22252a;
}

.x-logo,
.medium {
  width: 13.500px;
  height: 13.500px;
  overflow: hidden;
  background: #0b0b0c;
  color: #fff;
  font: 12px/13.500px "DejaVu Sans", sans-serif;
  text-align: center;
}

.medium {
  border-radius: 2px;
  font: bold 9px/13.500px "Liberation Serif", serif;
}

.bls {
  font: 7.500px/11px "Liberation Serif", serif;
  color: #777;
  border-bottom: 1px solid #ccc;
}

.bm.notlar,
.bm.visa {
  gap: 4.500px;
}

/* app shell */
.app {
  display: flex;
  height: 551px;
  background: #fff;
}

.sidebar {
  display: flex;
  flex-direction: column;
  width: 33px;
  border-right: 1px solid #e4e4e4;
}

.side-top,
.side-bottom {
  display: flex;
  flex-direction: column;
  align-items: center;
  padding-right: 4px;
}

.side-top {
  gap: 14px;
  height: 91px;
  padding-top: 12px;
}

.side-home {
  height: 43px;
  padding: 6px 0 0 3px;
  border-top: 1px solid #e4e4e4;
  border-bottom: 1px solid #e4e4e4;
}

.side-home span {
  display: flex;
  align-items: center;
  justify-content: center;
  width: 24px;
  height: 27px;
  border-radius: 3px;
  background: #f2f2f2;
}

.side-bottom {
  gap: 15.500px;
  height: 125px;
  margin-top: auto;
  padding-top: 12px;
  border-top: 1px solid #e4e4e4;
}

.sidebar .icon {
  width: 13px;
  height: 13px;
}

.main {
  display: flex;
  flex: 1;
  flex-direction: column;
}

.header {
  position: relative;
  display: flex;
  align-items: center;
  height: 55px;
  padding-top: 1px;
  border-bottom: 1px solid #e4e4e4;
  font-size: 11.700px;
}

.user {
  width: 9px;
  height: 9px;
  margin-left: 21px;
}

.crumb {
  margin-left: 4px;
  color: #55575c;
}

.slash {
  width: 5px;
  height: 14px;
  margin: 0 7px 0 8px;
  fill: none;
  stroke: #d4d4d4;
}

.wf-name {
  color: #303236;
}

.add-tag {
  margin-left: 18px;
  font-size: 10.100px;
  font-weight: 500;
  color: #a0a0a3;
}

.counter {
  width: 28px;
  height: 17px;
  margin-left: auto;
  border-radius: 3px;
  background: #f2f2f2;
  font-size: 10px;
  line-height: 17px;
  text-align: center;
  color: #55575c;
}

.publish {
  display: flex;
  height: 28px;
  margin-left: 10px;
  border: 1px solid #e4e4e4;
  border-radius: 4px;
  font-size: 11.700px;
  font-weight: 500;
}

.publish span {
  width: 62px;
  border-right: 1px solid #e4e4e4;
  line-height: 27px;
  text-align: center;
}

.publish .icon {
  width: 11px;
  height: 26px;
  margin: 0 7.500px;
}

.hist {
  width: 12px;
  margin-left: 17px;
}

.more {
  width: 11px;
  margin-left: 19px;
}

.github {
  display: flex;
  align-items: center;
  align-self: stretch;
  width: 147px;
  margin: -1px 0 0 25px;
  padding: 0 0 1px 16px;
  border-left: 1px solid #e4e4e4;
}

.gh-btn {
  display: flex;
  height: 24px;
  border: 1px solid #d9dce2;
  border-radius: 3px;
  font-size: 10.500px;
  font-weight: 600;
  line-height: 22px;
}

.gh-star {
  display: flex;
  align-items: center;
  gap: 3px;
  width: 54px;
  padding-left: 8px;
  border-right: 1px solid #d9dce2;
  background: #ebeff4;
}

.gh-star .icon {
  width: 13px;
}

.gh-count {
  width: 57px;
  text-align: center;
}

.view-tabs {
  position: absolute;
  left: 482px;
  top: 41px;
  z-index: 2;
  display: flex;
  width: 202px;
  height: 28px;
  padding: 3px;
  border-radius: 3px;
  background: #e2e2e2;
  font-size: 10.300px;
  font-weight: 500;
  line-height: 22px;
  color: #55575c;
}

.view-tabs span {
  width: 72px;
  text-align: center;
}

.view-tabs .on {
  width: 49px;
  border-radius: 3px;
  background: #fff;
  color: #303236;
}

.view-tabs .on + span + span {
  width: 75px;
}

/* canvas */
.canvas {
  position: relative;
  flex: 1;
  overflow: hidden;
  background-color: #f5f5f5;
  background-image: radial-gradient(circle, #dcdcdc .6px, transparent .9px);
  background-size: 8.316px 8.316px;
  background-position: 2.500px 2.200px;
}

.viewport {
  position: absolute;
  left: -33px;
  top: -154px;
  width: 1200px;
  height: 654px;
}

.edges {
  position: absolute;
  left: 0;
  top: 0;
  fill: none;
}

.edge {
  stroke: #5aae60;
  stroke-width: 1.300;
}

.edge-off {
  stroke: #b9b9bb;
  stroke-width: 1.100;
}

.head {
  fill: #3f9a4a;
}

.head-off {
  fill: #adadb0;
}

.edge-label {
  position: absolute;
  transform: translate(-50%, -50%);
  background: #f5f5f5;
  font-size: 6.800px;
  line-height: 8px;
  white-space: nowrap;
  color: #7c7c80;
}

.edge-label.dark {
  color: #5c5c60;
}

.node {
  position: absolute;
  display: flex;
  align-items: center;
  justify-content: center;
  width: 50px;
  height: 50px;
  border: 1px solid #5aae60;
  border-radius: 4px;
  background: #fff;
  box-shadow: 0 0 0 .400px #5aae60;
}

.node.trigger {
  border-radius: 18px 4px 4px 18px;
}

.node.selected {
  box-shadow: 0 0 0 .400px #5aae60, 0 0 0 3px #dadedb;
}

.node.wide {
  justify-content: flex-start;
  width: 116.600px;
  padding-left: 9px;
}

.node-icon {
  width: 20px;
  height: 20px;
  flex: none;
  fill: none;
  stroke-linecap: round;
  stroke-linejoin: round;
}

.node-icon.openai {
  width: 21px;
  height: 21px;
}

.node-icon.if {
  width: 22px;
}

.port {
  position: absolute;
  top: 25px;
  width: 9px;
  height: 9px;
  margin: -5.300px;
  border: 1px solid #b4b4b7;
  border-radius: 50%;
  background: #fff;
}

.port.in {
  left: 0;
}

.port.out {
  right: 0;
}

.done {
  position: absolute;
  right: 4px;
  bottom: 3px;
  display: flex;
  align-items: center;
  gap: 1.500px;
  font-size: 7.500px;
  line-height: 8px;
  font-weight: 500;
  color: #4a9e52;
}

.done svg {
  width: 8px;
  height: 8px;
  fill: none;
}

.caption {
  position: absolute;
  top: 52.700px;
  left: -26px;
  width: 100px;
  text-align: center;
  white-space: nowrap;
}

.name {
  font-size: 8.300px;
  font-weight: 500;
  line-height: 10.400px;
  color: #303236;
}

.sub {
  margin: 1.500px -5px 0;
  font-size: 6.850px;
  line-height: 9px;
  color: #a3a3a6;
}

.wide .caption {
  position: static;
  width: auto;
  margin-left: 8px;
  text-align: left;
}

.wide .sub {
  margin: 1px 0 0;
}

.diamond {
  position: absolute;
  width: 6px;
  height: 6px;
  margin: -3px;
  border: 1px solid #b4b4b7;
  background: #fff;
  transform: rotate(45deg);
}

.add-box {
  position: absolute;
  width: 11px;
  height: 11px;
  margin: -5.500px;
  border-radius: 2px;
  background: #dedede;
  font-size: 9px;
  line-height: 10.500px;
  text-align: center;
  color: #444;
}

.bolt {
  position: absolute;
  margin: -4.500px;
  line-height: 0;
}

.bolt svg {
  width: 9px;
  height: 9px;
}

button {
  display: flex;
  align-items: center;
  justify-content: center;
  width: 30px;
  height: 30px;
  padding: 0;
  border: 1px solid #e6e6e6;
  border-radius: 4px;
  background: #fff;
  font-family: inherit;
  color: #303236;
}

button .icon {
  width: 13px;
  height: 13px;
}

button .broom {
  width: 14px;
  height: 14px;
}

.side-tools {
  position: absolute;
  right: 13.500px;
  top: 13.500px;
  display: flex;
  flex-direction: column;
  gap: 6.800px;
}

.zoom-tools {
  position: absolute;
  left: 13px;
  bottom: 14px;
  display: flex;
  gap: 10px;
}

.execute {
  position: absolute;
  left: 511px;
  bottom: 14px;
  gap: 5px;
  width: 144px;
  border: 0;
  background: #ee7430;
  color: #fff;
  font-size: 11.700px;
  font-weight: 500;
}

/* logs */
.logs {
  display: flex;
  align-items: center;
  height: 27px;
  padding-left: 13px;
  border-top: 1px solid #e4e4e4;
  font-size: 10.200px;
}

.logs-title {
  font-weight: 500;
}

.clear {
  display: flex;
  align-items: center;
  gap: 5px;
  height: 20px;
  margin-left: auto;
  padding: 0 6px;
  border: 1px solid #e6e6e6;
  border-radius: 3px;
  color: #98989b;
}

.clear .icon {
  width: 11px;
  height: 11px;
}

.pop {
  width: 11px;
  height: 11px;
  margin-left: 7px;
}

.up {
  width: 11px;
  margin: 0 13px 0 12px;
}

.desk {
  height: 4px;
  background: linear-gradient(to right, #000 210px, #3a3a3a 225px, #3a3a3a 980px, #000 990px);
}
```
